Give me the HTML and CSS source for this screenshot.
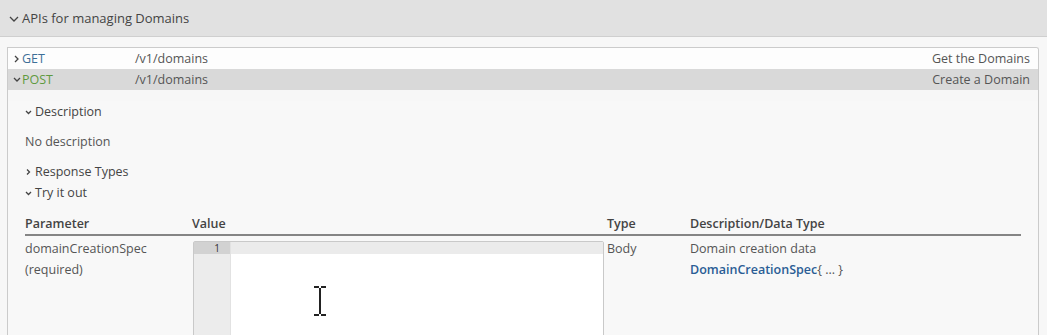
FILE: index.html
```html
<!DOCTYPE html>
<html lang="en">
	<head>
		<meta charset="UTF-8">
		<meta name="viewport" content="width=device-width, initial-scale=1">
		<link rel="stylesheet" href="styles.css">
	</head>

	<body>
		<div class="sectionHead">
			<svg class="chevron" width="10" height="8" viewBox="0 0 10 8"><polyline points="1,2 5,6 9,2" /></svg>
			<span>APIs for managing Domains</span>
		</div>

		<div class="operations">
			<div class="opRow">
				<svg class="chevronSmall" width="8" height="8" viewBox="0 0 8 8"><polyline points="2,1 5,4 2,7" /></svg>
				<span class="method methodGet">GET</span>
				<span class="path">/v1/domains</span>
				<span class="summary">Get the Domains</span>
			</div>
			<div class="opRow opRowOpen">
				<svg class="chevronSmall" width="8" height="8" viewBox="0 0 8 8"><polyline points="1,2 4,5 7,2" /></svg>
				<span class="method methodPost">POST</span>
				<span class="path">/v1/domains</span>
				<span class="summary">Create a Domain</span>
			</div>

			<div class="opBody">
				<div class="toggle toggleFirst">
					<svg class="chevronTiny" width="8" height="8" viewBox="0 0 8 8"><polyline points="1,3 3.5,5.5 6,3" /></svg>
					<span>Description</span>
				</div>
				<div class="noDescription">No description</div>
				<div class="toggle">
					<svg class="chevronTiny" width="8" height="8" viewBox="0 0 8 8"><polyline points="2,1.5 4.5,4 2,6.5" /></svg>
					<span>Response Types</span>
				</div>
				<div class="toggle">
					<svg class="chevronTiny" width="8" height="8" viewBox="0 0 8 8"><polyline points="1,3 3.5,5.5 6,3" /></svg>
					<span>Try it out</span>
				</div>

				<div class="params">
					<div class="paramsHead">
						<span>Parameter</span>
						<span>Value</span>
						<span>Type</span>
						<span>Description/Data Type</span>
					</div>
					<div class="paramsRow">
						<div class="cell">
							<div>domainCreationSpec</div>
							<div>(required)</div>
						</div>
						<div class="cell">
							<div class="editor">
								<div class="gutter">
									<div class="lineNumber">1</div>
								</div>
								<div class="code">
									<div class="activeLine"></div>
									<svg class="ibeam" width="18" height="32" viewBox="0 0 18 32">
										<path d="M3 2 H8 M10 2 H15 M9 3 V29 M3 30 H8 M10 30 H15" />
									</svg>
								</div>
							</div>
						</div>
						<div class="cell">Body</div>
						<div class="cell">
							<div>Domain creation data</div>
							<div><span class="model">DomainCreationSpec</span>{ ... }</div>
						</div>
					</div>
				</div>
			</div>
		</div>
	</body>
</html>
```

FILE: styles.css
```css
body {
	margin: 0;
	background-color: #f7f7f7;
	font-family: "Open Sans", "DejaVu Sans", sans-serif;
	font-size: 12.5px;
	color: #555;
	overflow: hidden;
}

svg polyline,
svg path {
	fill: none;
	stroke: #444;
	stroke-width: 1.3;
}

/*---------------------------SECTION---------------------------*/
.sectionHead {
	display: flex;
	align-items: center;
	height: 37px;
	padding-left: 9px;
	background-color: #e1e1e1;
	border-bottom: 1px solid #cfcfcf;
	box-sizing: border-box;
	color: #444;
	font-size: 13px;
}

.chevron {
	margin-right: 3px;
	margin-top: 1px;
}

/*---------------------------OPERATIONS---------------------------*/
.operations {
	margin: 10px 8px 0 7px;
	border: 1px solid #cbcbcb;
	border-bottom: none;
	border-radius: 0 3px 0 0;
	height: 300px;
	box-sizing: border-box;
	overflow: hidden;
}

.opRow {
	display: flex;
	align-items: center;
	height: 21px;
	padding: 0 8px 0 5px;
	background-color: #fdfdfd;
}

.opRowOpen {
	background-color: #d9d9d9;
}

.chevronSmall {
	margin-right: 1px;
}

.method {
	width: 113px;
}

.methodGet {
	color: #3d6f98;
}

.methodPost {
	color: #5f9a3e;
}

.path {
	flex: 1;
	color: #555;
}

.summary {
	color: #555;
}

/*---------------------------BODY---------------------------*/
.opBody {
	padding: 0 17px 0 17px;
	background-color: #f8f8f8;
}

.toggle {
	display: flex;
	align-items: center;
	height: 21px;
	color: #444;
}

.toggleFirst {
	margin-top: 11px;
}

.chevronTiny {
	margin-right: 2px;
}

.noDescription {
	height: 30px;
	line-height: 30px;
	margin: 5px 0 4px 0;
	color: #555;
}

/*---------------------------PARAMETERS---------------------------*/
.params {
	margin-top: 10px;
}

.paramsHead,
.paramsRow {
	display: grid;
	grid-template-columns: 167px 415px 83px 1fr;
}

.paramsHead {
	height: 21px;
	align-items: center;
	font-weight: 600;
	color: #444;
	border-bottom: 2px solid #858585;
}

.paramsRow {
	padding-top: 2px;
}

.cell {
	line-height: 21px;
}

.editor {
	display: flex;
	margin: 3px 0 0 1px;
	width: 411px;
	height: 120px;
	border: 1px solid #c9c9c9;
	border-radius: 2px;
	background-color: #fff;
	box-sizing: border-box;
}

.gutter {
	width: 36px;
	background-color: #ececec;
	border-right: 1px solid #e2e2e2;
}

.lineNumber {
	height: 12px;
	line-height: 12px;
	padding-right: 10px;
	text-align: right;
	background-color: #d2d2d2;
	color: #333;
	font-size: 10px;
}

.code {
	flex: 1;
	position: relative;
}

.activeLine {
	height: 12px;
	background-color: #ebebeb;
}

.ibeam {
	position: absolute;
	left: 80px;
	top: 43px;
}

.ibeam path {
	stroke: #222;
	stroke-width: 2;
}

.model {
	color: #2a5d95;
	font-weight: 600;
}
```
